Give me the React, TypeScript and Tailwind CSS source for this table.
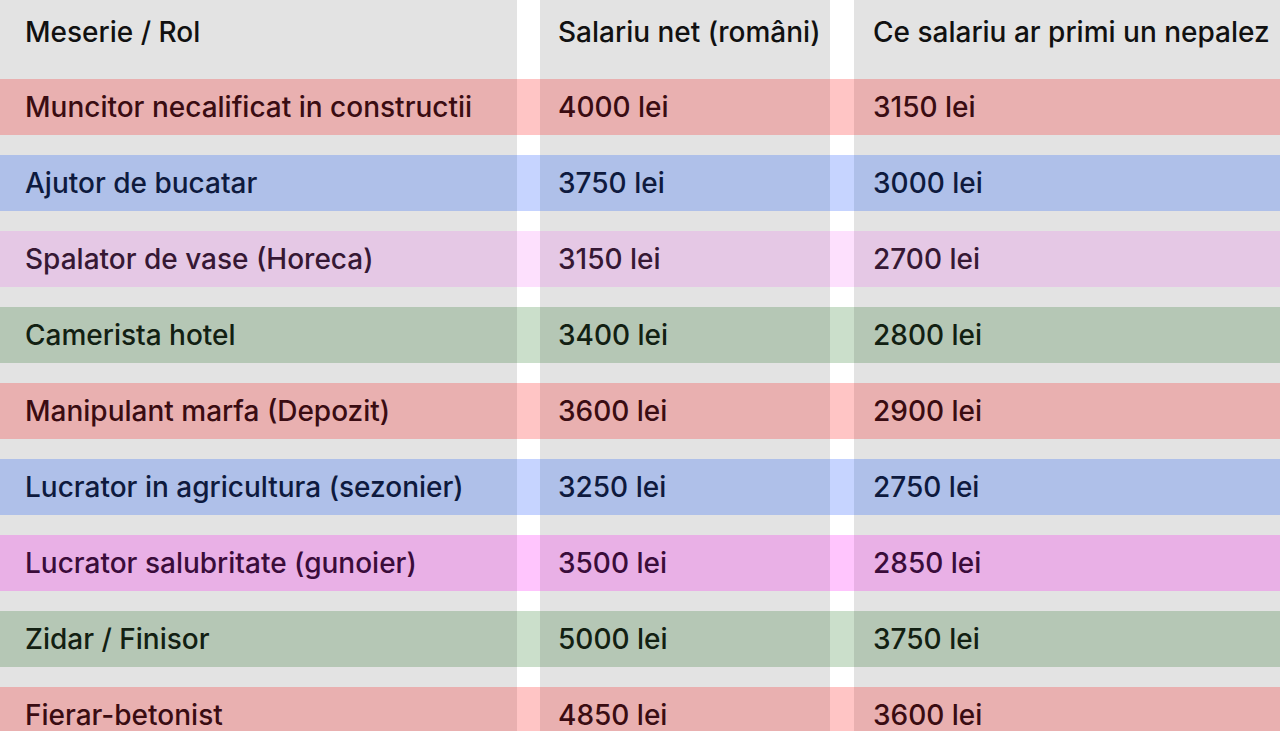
import React from "react";

type RowDef = { a: string; b: string; c: string; bg: string; light: string; text: string };

const rows: RowDef[] = [
  { a: "Muncitor necalificat in constructii", b: "4000 lei", c: "3150 lei", bg: "bg-[#e9b0b0]", light: "bg-[#ffc5c5]", text: "text-[#3a0c12]" },
  { a: "Ajutor de bucatar", b: "3750 lei", c: "3000 lei", bg: "bg-[#afc0e9]", light: "bg-[#c6d4ff]", text: "text-[#0e1a3e]" },
  { a: "Spalator de vase (Horeca)", b: "3150 lei", c: "2700 lei", bg: "bg-[#e5c8e5]", light: "bg-[#fde0fd]", text: "text-[#361834]" },
  { a: "Camerista hotel", b: "3400 lei", c: "2800 lei", bg: "bg-[#b5c7b5]", light: "bg-[#cbdfcb]", text: "text-[#122012]" },
  { a: "Manipulant marfa (Depozit)", b: "3600 lei", c: "2900 lei", bg: "bg-[#e9b0b0]", light: "bg-[#ffc5c5]", text: "text-[#3a0c12]" },
  { a: "Lucrator in agricultura (sezonier)", b: "3250 lei", c: "2750 lei", bg: "bg-[#afc0e9]", light: "bg-[#c6d4ff]", text: "text-[#0e1a3e]" },
  { a: "Lucrator salubritate (gunoier)", b: "3500 lei", c: "2850 lei", bg: "bg-[#e9b0e6]", light: "bg-[#ffc5fd]", text: "text-[#3a0c3a]" },
  { a: "Zidar / Finisor", b: "5000 lei", c: "3750 lei", bg: "bg-[#b5c7b5]", light: "bg-[#cbdfcb]", text: "text-[#122012]" },
  { a: "Fierar-betonist", b: "4850 lei", c: "3600 lei", bg: "bg-[#e9b0b0]", light: "bg-[#ffc5c5]", text: "text-[#3a0c12]" },
];

function Gap() {
  return (
    <div className="flex h-[20px] shrink-0">
      <div className="w-[517px] bg-[#e3e3e3]" />
      <div className="w-[23px] bg-white" />
      <div className="w-[290px] bg-[#e3e3e3]" />
      <div className="w-[24px] bg-white" />
      <div className="flex-1 bg-[#e3e3e3]" />
    </div>
  );
}

function Row({ r }: { r: RowDef }) {
  return (
    <div className={`flex h-[56px] shrink-0 ${r.text}`}>
      <div className={`w-[517px] ${r.bg} flex items-center pl-[25px] whitespace-nowrap`}>{r.a}</div>
      <div className={`w-[23px] ${r.light}`} />
      <div className={`w-[290px] ${r.bg} flex items-center pl-[18px] whitespace-nowrap`}>{r.b}</div>
      <div className={`w-[24px] ${r.light}`} />
      <div className={`flex-1 ${r.bg} flex items-center pl-[19px] whitespace-nowrap`}>{r.c}</div>
    </div>
  );
}

export default function App() {
  return (
    <div
      className="w-[1280px] h-[731px] overflow-hidden flex flex-col bg-[#e3e3e3] text-[28px] leading-none font-[450]"
      style={{ fontFamily: "Inter, Roboto, sans-serif" }}
    >
      <div className="flex h-[79px] shrink-0 text-[#111111]">
        <div className="w-[517px] bg-[#e3e3e3] pl-[25px] pt-[18px]">Meserie / Rol</div>
        <div className="w-[23px] bg-white" />
        <div className="w-[290px] bg-[#e3e3e3] pl-[18px] pt-[18px] whitespace-nowrap">Salariu net (români)</div>
        <div className="w-[24px] bg-white" />
        <div className="flex-1 bg-[#e3e3e3] pl-[19px] pt-[18px] whitespace-nowrap">Ce salariu ar primi un nepalez</div>
      </div>
      {rows.map((r, i) => (
        <React.Fragment key={i}>
          {i > 0 && <Gap />}
          <Row r={r} />
        </React.Fragment>
      ))}
    </div>
  );
}
